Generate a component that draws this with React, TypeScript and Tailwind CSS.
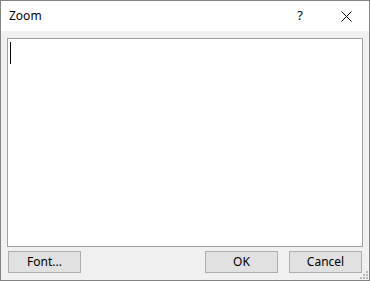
export default function App() {
  const font = { fontFamily: '"Noto Sans", "Open Sans", sans-serif' };
  return (
    <div
      className="w-[370px] h-[281px] border border-[#838383] flex flex-col bg-[#f0f0f0] text-[12px] text-black"
      style={font}
    >
      {/* Title bar */}
      <div className="h-[30px] bg-white flex items-center">
        <span className="ml-[8px] leading-none">Zoom</span>
        <div className="ml-auto flex items-center h-full">
          <div className="w-[46px] h-full flex items-center justify-center text-[13px]">?</div>
          <div className="w-[46px] h-full flex items-center justify-center">
            <svg width="11" height="11" viewBox="0 0 11 11" stroke="#000" strokeWidth="1" shapeRendering="crispEdges">
              <path d="M0.5 0.5 L10.5 10.5 M10.5 0.5 L0.5 10.5" shapeRendering="geometricPrecision" />
            </svg>
          </div>
        </div>
      </div>

      {/* Body */}
      <div className="flex-1 flex flex-col pt-[7px] px-[6px] pb-[7px] relative">
        <div className="h-[209px] bg-white border border-[#a0a0a0] relative">
          <div className="absolute left-[2px] top-[3px] w-[1px] h-[22px] bg-black" />
        </div>
        <div className="flex items-center mt-[4px] px-[1px]">
          <button className="w-[73px] h-[22px] bg-[#e1e1e1] border border-[#adadad] text-[12px]">Font...</button>
          <button className="ml-auto w-[73px] h-[22px] bg-[#e1e1e1] border border-[#adadad] text-[12px]">OK</button>
          <button className="ml-[11px] w-[73px] h-[22px] bg-[#e1e1e1] border border-[#adadad] text-[12px]">Cancel</button>
        </div>
        {/* resize grip */}
        <svg className="absolute right-[1px] bottom-[1px]" width="8" height="8" viewBox="0 0 8 8" fill="#b8b8b8">
          <rect x="6" y="0" width="2" height="2" />
          <rect x="3" y="3" width="2" height="2" />
          <rect x="6" y="3" width="2" height="2" />
          <rect x="0" y="6" width="2" height="2" />
          <rect x="3" y="6" width="2" height="2" />
          <rect x="6" y="6" width="2" height="2" />
        </svg>
      </div>
    </div>
  );
}
